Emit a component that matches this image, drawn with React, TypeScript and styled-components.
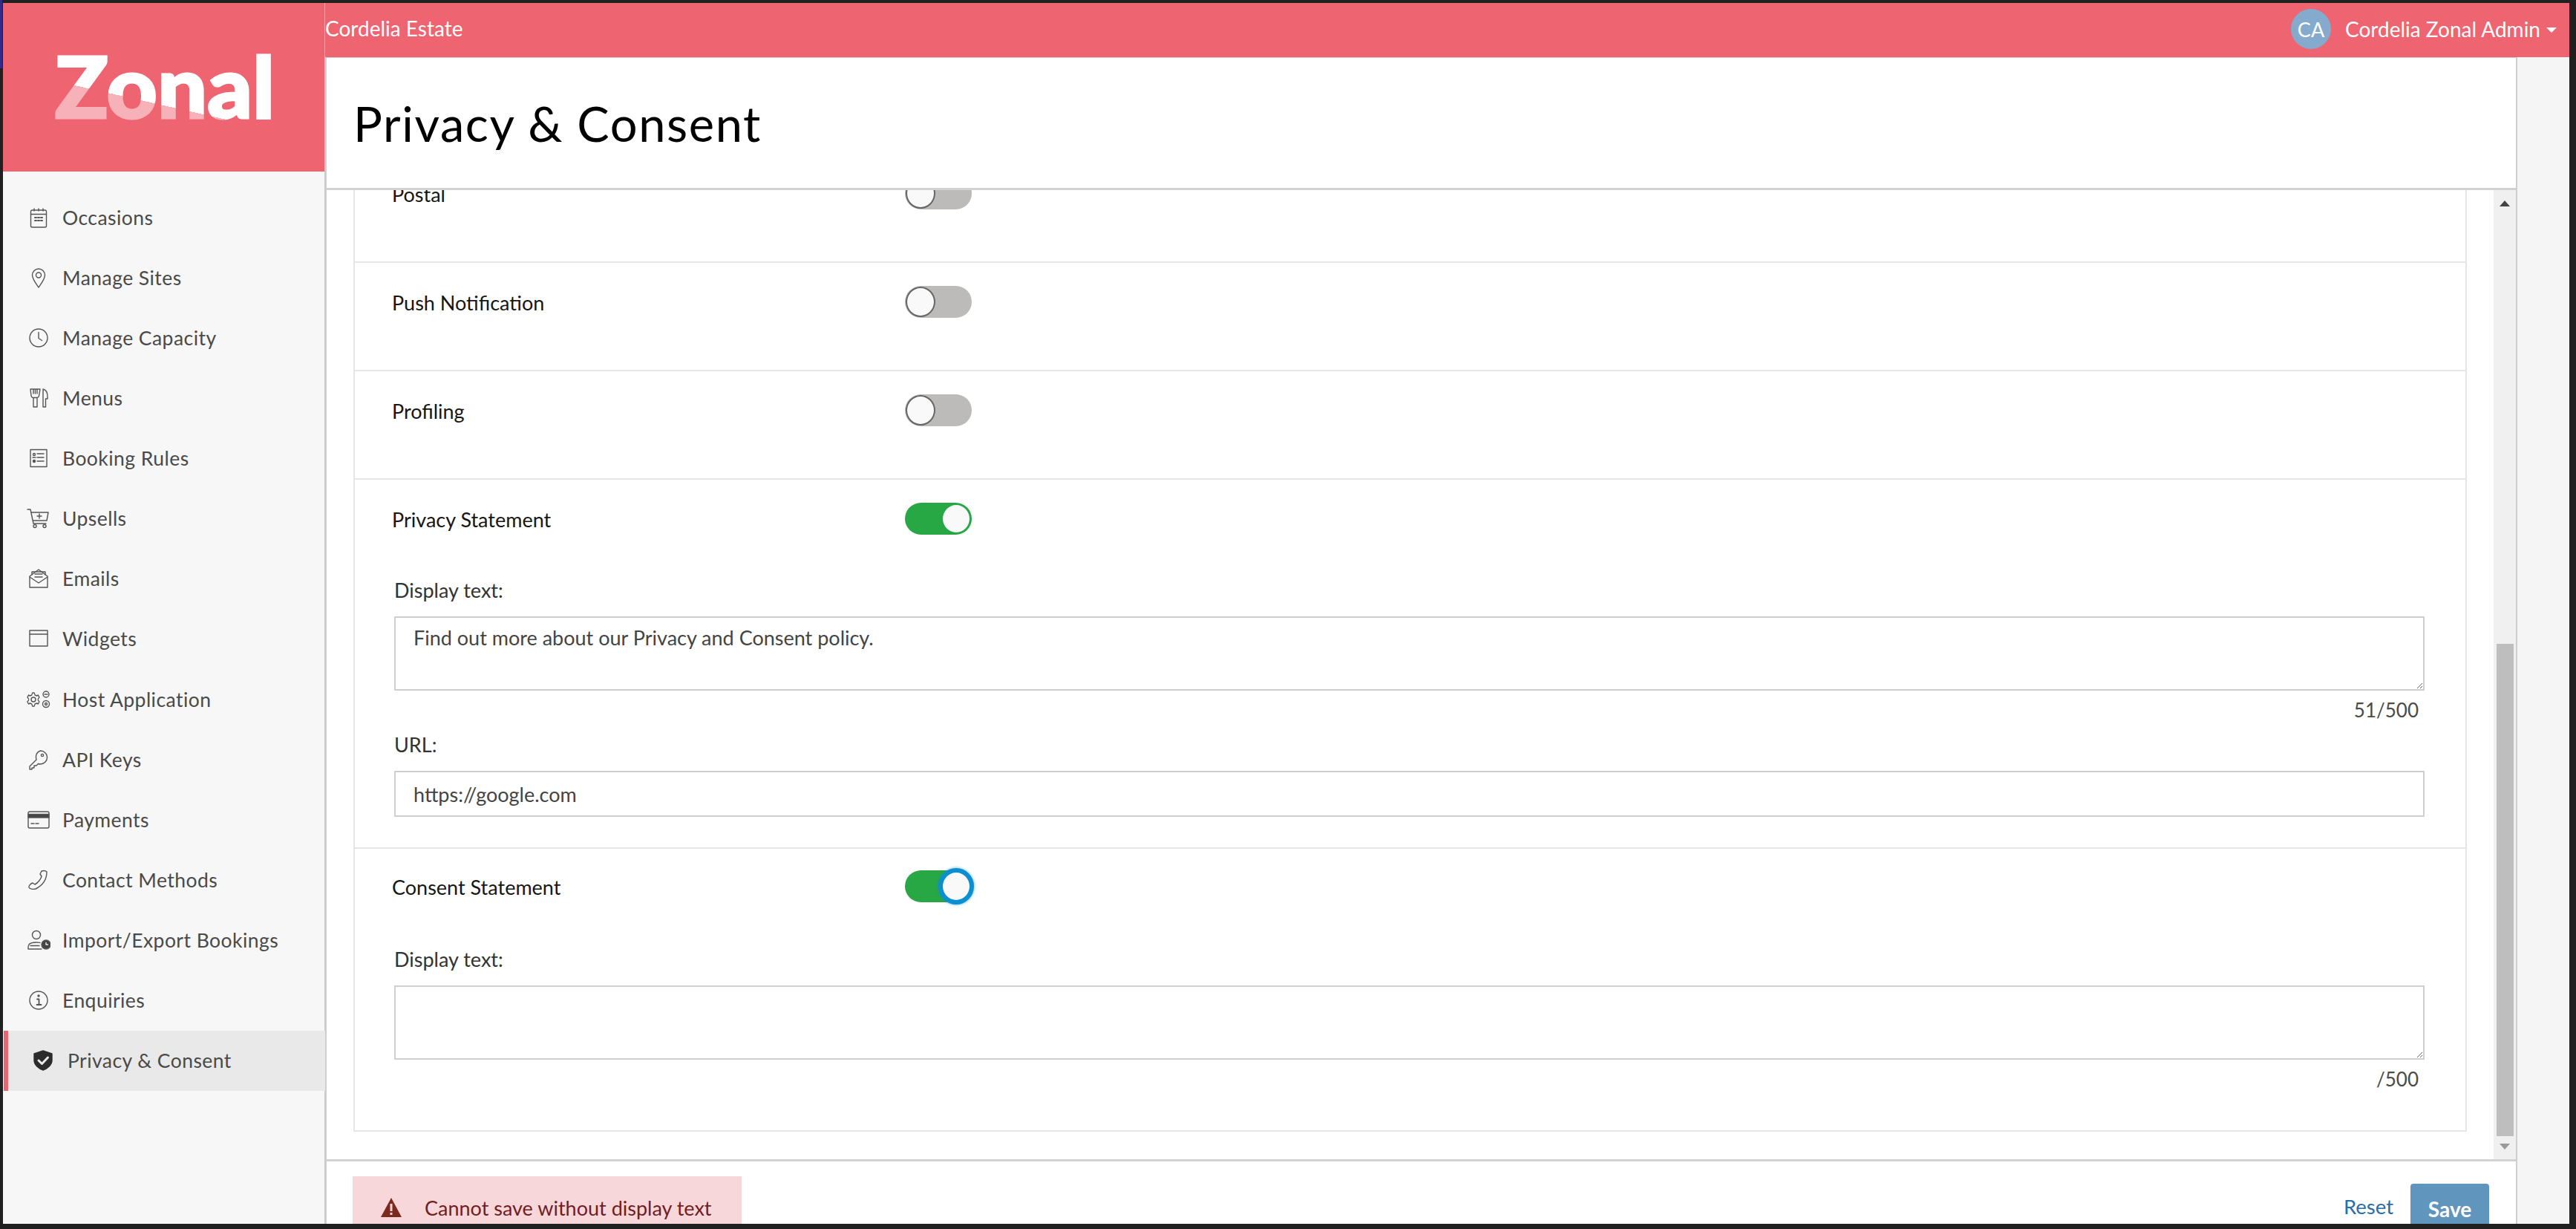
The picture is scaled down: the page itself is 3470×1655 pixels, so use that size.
import React from "react";
import styled, { createGlobalStyle } from "styled-components";

const Global = createGlobalStyle`
  html, body { margin: 0; padding: 0; height: 100%; background: #1e1e1e; }
  * { box-sizing: border-box; }
  body { font-family: "Lato", "Open Sans", sans-serif; overflow: hidden; }
`;

const Frame = styled.div`
  position: relative;
  width: 3470px;
  height: 1655px;
  padding: 4px 9px 7px 4px;
  background: #202020;
  overflow: hidden;
  &::before {
    content: "";
    position: absolute;
    left: 0;
    top: 0;
    width: 3px;
    height: 92px;
    background: #2c2c8c;
  }
`;
const Shell = styled.div`
  display: grid;
  grid-template-columns: 434px 1fr;
  height: 100%;
  background: #f5f5f5;
`;
const Sidebar = styled.aside`
  display: flex;
  flex-direction: column;
  background: #f7f7f7;
  border-right: 1px solid #c9c9c9;
`;
const LogoBlock = styled.div`
  height: 227px;
  flex: none;
  background: #ee6471;
  padding: 60px 0 0 60px;
`;
const Nav = styled.nav`
  display: flex;
  flex-direction: column;
  padding-top: 21px;
`;
const NavItem = styled.a<{ $active?: boolean }>`
  display: flex;
  align-items: center;
  height: 81.14px;
  gap: ${(p) => (p.$active ? "17px" : "16px")};
  padding-left: ${(p) => (p.$active ? "31px" : "32px")};
  margin-left: ${(p) => (p.$active ? "1px" : "0")};
  margin-right: -1px;
  border-left: ${(p) => (p.$active ? "6px solid #ee6471" : "0")};
  background: ${(p) => (p.$active ? "#e9e9e9" : "transparent")};
  color: #4a4a4a;
  font-size: 26.5px;
  letter-spacing: 0.45px;
`;
const NavGlyph = styled.svg`
  flex: none;
  width: 32px;
  height: 28px;
  fill: none;
  stroke: #555;
  stroke-width: 1.4;
  stroke-linecap: round;
  stroke-linejoin: round;
`;
const Main = styled.div`
  display: flex;
  flex-direction: column;
  min-width: 0;
  min-height: 0;
`;
const TopBar = styled.header`
  flex: none;
  height: 73px;
  background: #ee6471;
  color: #fff;
  display: flex;
  align-items: center;
  justify-content: space-between;
  padding: 0 17px 0 0;
  font-size: 28px;
`;
const Estate = styled.span`
  padding-bottom: 6px;
`;
const UserMenu = styled.div`
  display: flex;
  align-items: center;
  gap: 19px;
  padding-bottom: 3px;
`;
const Avatar = styled.span`
  width: 54px;
  height: 54px;
  border-radius: 50%;
  background: #84abcd;
  display: flex;
  align-items: center;
  justify-content: center;
  font-size: 27px;
`;
const Caret = styled.span`
  display: inline-block;
  width: 0;
  height: 0;
  margin-left: 8px;
  margin-bottom: 4px;
  vertical-align: middle;
  border-left: 7px solid transparent;
  border-right: 7px solid transparent;
  border-top: 7px solid #fff;
`;
const Content = styled.div`
  flex: 1;
  min-height: 0;
  display: flex;
  flex-direction: column;
  width: 2953px;
  background: #fff;
  border: 2px solid #cfcfcf;
  border-bottom: 0;
  border-top-width: 1px;
`;
const TitleBar = styled.div`
  flex: none;
  height: 178px;
  display: flex;
  align-items: center;
  padding-left: 36px;
  border-bottom: 3px solid #d2d2d2;
`;
const Title = styled.h1`
  margin: 0;
  font-size: 65px;
  font-weight: 400;
  color: #000;
  letter-spacing: 1.6px;
`;
const Middle = styled.div`
  flex: 1;
  min-height: 0;
  display: flex;
`;
const Scroller = styled.div`
  flex: 1;
  min-width: 0;
  overflow: hidden;
  padding: 0 36px 0 36px;
`;
const Card = styled.section`
  margin-top: -50px;
  border: 2px solid #e6e6e6;
`;
const Row = styled.div<{ $top?: number; $bottom?: number; $last?: boolean }>`
  min-height: 146px;
  padding: ${(p) => p.$top ?? 31}px 55px ${(p) => p.$bottom ?? 0}px 50px;
  border-bottom: ${(p) => (p.$last ? "0" : "2px solid #e6e6e6")};
`;
const RowHead = styled.div`
  display: flex;
  align-items: center;
  height: 43px;
`;
const RowLabel = styled.span`
  width: 691px;
  flex: none;
  font-size: 27px;
  color: #161616;
  padding-top: 2px;
`;
const Toggle = styled.span<{ $on?: boolean; $focus?: boolean }>`
  display: flex;
  justify-content: ${(p) => (p.$on ? "flex-end" : "flex-start")};
  width: 90px;
  height: 43px;
  padding: 1px;
  border-radius: 22px;
  background: ${(p) => (p.$on ? "#28a745" : "#bdbbba")};
`;
const Knob = styled.span<{ $on?: boolean; $focus?: boolean }>`
  width: 40px;
  height: 41px;
  border-radius: 50%;
  background: #f9f9f9;
  border: 2px solid ${(p) => (p.$on ? "#28a745" : "#666")};
  box-shadow: ${(p) => (p.$focus ? "0 0 0 4px #0b8fd0, 0 0 3px 5px rgba(11,143,208,.45)" : "none")};
  ${(p) => (p.$focus ? "border-color: #0b8fd0;" : "")}
`;
const Field = styled.div`
  margin-left: 3px;
`;
const FieldLabel = styled.label<{ $top?: number }>`
  display: block;
  height: 36px;
  line-height: 36px;
  margin-top: ${(p) => p.$top ?? 0}px;
  font-size: 27px;
  color: #333;
`;
const TextArea = styled.textarea`
  display: block;
  width: 100%;
  height: 100px;
  margin-top: 17px;
  padding: 8px 24px;
  border: 2px solid #cfcfcf;
  border-radius: 0;
  background: #fff;
  resize: vertical;
  outline: none;
  font: 400 27px/1.4 "Lato", "Open Sans", sans-serif;
  color: #444;
`;
const TextInput = styled.input`
  display: block;
  width: 100%;
  height: 62px;
  margin-top: 17px;
  padding: 0 24px;
  border: 2px solid #cfcfcf;
  border-radius: 0;
  outline: none;
  font: 400 27px "Lato", "Open Sans", sans-serif;
  color: #444;
`;
const Counter = styled.div`
  height: 36px;
  line-height: 36px;
  margin-top: 8px;
  padding-right: 8px;
  text-align: right;
  font-size: 26px;
  color: #4a4a4a;
`;
const ScrollBar = styled.div`
  flex: none;
  width: 30px;
  background: #f0f0f0;
  display: flex;
  flex-direction: column;
  align-items: center;
`;
const ArrowUp = styled.span`
  flex: none;
  width: 0;
  height: 0;
  margin-top: 14px;
  border-left: 7px solid transparent;
  border-right: 7px solid transparent;
  border-bottom: 8px solid #444;
`;
const Thumb = styled.div`
  flex: none;
  width: 23px;
  height: 663px;
  margin-top: 589px;
  background: #bebebe;
`;
const ArrowDown = styled.span`
  flex: none;
  width: 0;
  height: 0;
  margin-top: 10px;
  border-left: 7px solid transparent;
  border-right: 7px solid transparent;
  border-top: 8px solid #9a9a9a;
`;
const Footer = styled.footer`
  flex: none;
  height: 87px;
  overflow: hidden;
  display: flex;
  justify-content: space-between;
  padding: 20px 36px 0 35px;
  border-top: 3px solid #d2d2d2;
`;
const Alert = styled.div`
  width: 524px;
  height: 90px;
  display: flex;
  align-items: center;
  gap: 30px;
  padding: 0 0 6px 37px;
  background: #f8d7da;
  color: #721c24;
  font-size: 27px;
`;
const AlertGlyph = styled.svg`
  flex: none;
  width: 30px;
  height: 28px;
  fill: #7c2a1e;
`;
const Actions = styled.div`
  display: flex;
  align-items: flex-start;
  gap: 23px;
  margin-top: 10px;
`;
const ResetLink = styled.a`
  color: #2a6da8;
  font-size: 27.500px;
  padding-top: 14px;
`;
const SaveButton = styled.button`
  width: 106px;
  height: 80px;
  border: 0;
  padding: 0 0 12px;
  border-radius: 4px;
  background: #6096bd;
  color: #fff;
  font: 700 28px "Lato", "Open Sans", sans-serif;
`;

const CalendarIcon = () => (
  <NavGlyph viewBox="0 0 32 28">
    <rect x="5.5" y="4" width="21" height="23" rx="2" />
    <path d="M5.5 9.5h21M10 2v3M16 2v3M22 2v3" />
    <path d="M11 14h2M15 14h2M19 14h2M11 18h2M15 18h2M19 18h2" strokeWidth="2" />
  </NavGlyph>
);
const PinIcon = () => (
  <NavGlyph viewBox="0 0 32 28">
    <path d="M16 27C11 20 7.5 15.500 7.500 10.500a8.500 8.500 0 0 1 17 0C24.500 15.500 21 20 16 27z" />
    <circle cx="16" cy="10.500" r="3.500" />
  </NavGlyph>
);
const ClockIcon = () => (
  <NavGlyph viewBox="0 0 32 28">
    <circle cx="16" cy="14" r="12" />
    <path d="M16 6.500V14.500l4.500 3" />
  </NavGlyph>
);
const MenusIcon = () => (
  <NavGlyph viewBox="0 0 32 28">
    <path d="M5 2h13l-1.500 9a3 3 0 0 1-3 2.500h-4.500a3 3 0 0 1-3-2.500zM9 13.500V26h5V13.500M9 2v6M11.500 2v6M14 2v6" />
    <path d="M22 26V2c4 1 6 5 6 10v3h-2.500v11z" />
  </NavGlyph>
);
const RulesIcon = () => (
  <NavGlyph viewBox="0 0 32 28">
    <rect x="5" y="2.500" width="22" height="23" />
    <circle cx="10" cy="9" r="1.500" />
    <circle cx="10" cy="18" r="1.500" fill="#555" />
    <path d="M14 8h9M14 13h9M14 18h9M8 13h4" />
  </NavGlyph>
);
const CartIcon = () => (
  <NavGlyph viewBox="0 0 32 28">
    <path d="M1 2h4l4 19h17M6 6h23l-2 11H8.500" />
    <circle cx="11" cy="24.500" r="2" />
    <circle cx="24" cy="24.500" r="2" />
    <path d="M17 8v6M14 11h6" />
  </NavGlyph>
);
const MailIcon = () => (
  <NavGlyph viewBox="0 0 32 28">
    <path d="M4 11v15h24V11L16 2z" />
    <path d="M4 12l12 8 12-8M7 9V5h18v4" />
    <path d="M11 8h10M11 12h10" />
  </NavGlyph>
);
const WidgetIcon = () => (
  <NavGlyph viewBox="0 0 32 28">
    <rect x="4" y="3" width="24" height="21" />
    <path d="M4 8h24" />
  </NavGlyph>
);
const HostIcon = () => (
  <NavGlyph viewBox="0 0 32 28">
    <path d="M9 6l3 0 1 3 3 1 2-1 2 3-2 2v2l2 2-2 3-2-1-3 1-1 3H9l-1-3-3-1-2 1-2-3 2-2v-2l-2-2 2-3 2 1 3-1z" transform="translate(0 -1) scale(.85 1)" />
    <circle cx="9" cy="14" r="3" />
    <circle cx="26" cy="7" r="4" />
    <circle cx="26" cy="20" r="4.500" />
    <circle cx="26" cy="20" r="1.500" />
    <path d="M24 7h4" />
  </NavGlyph>
);
const KeyIcon = () => (
  <NavGlyph viewBox="0 0 32 28">
    <path d="M18.500 2a9 9 0 0 1 0 18c-1 0-2-.2-3-.5L13 22h-3v3H7v2H4v-4l9-9c-.3-1-.5-2-.5-3A9 9 0 0 1 18.500 2z" />
    <circle cx="21" cy="8" r="1.600" />
  </NavGlyph>
);
const CardIcon = () => (
  <NavGlyph viewBox="0 0 32 28">
    <rect x="2" y="3" width="28" height="22" rx="2" />
    <path d="M2 6.500h28V11H2z" fill="#444" />
    <path d="M6 19h4M12 19h4" />
  </NavGlyph>
);
const PhoneIcon = () => (
  <NavGlyph viewBox="0 0 32 28">
    <path d="M20 2c3-1 6 0 7 1 0 10-5 18-15 23-4 1-8 0-9-2-.5-2 2-5 5-6l3 2c4-2 8-7 9-11l-2-3 2-4z" />
  </NavGlyph>
);
const PersonIcon = () => (
  <NavGlyph viewBox="0 0 32 28">
    <circle cx="13" cy="7" r="5.500" />
    <path d="M2 26v-3c0-4 4-6 11-6 2 0 3 .2 5 .5M2 26h18M5 21.500h12" />
    <circle cx="26" cy="20" r="6" fill="#444" />
    <path d="M26 17.500V20h2.500" stroke="#eee" />
  </NavGlyph>
);
const InfoIcon = () => (
  <NavGlyph viewBox="0 0 32 28">
    <circle cx="16" cy="14" r="12" />
    <path d="M14 12.500h2.500V20M13.500 20h6" strokeWidth="1.800" />
    <circle cx="16" cy="8" r="1" fill="#555" />
  </NavGlyph>
);
const ShieldIcon = () => (
  <NavGlyph viewBox="0 0 32 28">
    <path d="M16 1l12 4v9c0 6-6 11-12 13C10 25 4 20 4 14V5z" fill="#2c2c2c" stroke="#2c2c2c" />
    <path d="M10 14l4.500 4.500L22.500 10" stroke="#e9e9e9" strokeWidth="3" />
  </NavGlyph>
);

const items = [
  ["Occasions", CalendarIcon],
  ["Manage Sites", PinIcon],
  ["Manage Capacity", ClockIcon],
  ["Menus", MenusIcon],
  ["Booking Rules", RulesIcon],
  ["Upsells", CartIcon],
  ["Emails", MailIcon],
  ["Widgets", WidgetIcon],
  ["Host Application", HostIcon],
  ["API Keys", KeyIcon],
  ["Payments", CardIcon],
  ["Contact Methods", PhoneIcon],
  ["Import/Export Bookings", PersonIcon],
  ["Enquiries", InfoIcon],
  ["Privacy & Consent", ShieldIcon],
] as const;

const Switch = ({ on, focus }: { on?: boolean; focus?: boolean }) => (
  <Toggle $on={on}>
    <Knob $on={on} $focus={focus} />
  </Toggle>
);

export default function App() {
  return (
    <Frame>
      <Global />
      <Shell>
        <Sidebar>
          <LogoBlock>
            <svg width="360" height="160" viewBox="0 0 360 160" role="img" aria-label="Zonal">
              <defs>
                <linearGradient id="logoFill" gradientUnits="userSpaceOnUse" x1="132" y1="-30" x2="88" y2="165">
                  <stop offset="0.5" stopColor="#ffffff" />
                  <stop offset="0.5" stopColor="#f7b1b8" />
                </linearGradient>
              </defs>
              <text
                x="10"
                y="95"
                fontFamily="Lato, sans-serif"
                fontWeight="900"
                fontSize="114"
                textLength="296"
                lengthAdjust="spacingAndGlyphs"
                fill="url(#logoFill)"
                stroke="url(#logoFill)"
                strokeWidth="3"
              >
                Zonal
              </text>
            </svg>
          </LogoBlock>
          <Nav>
            {items.map(([label, Icon]) => (
              <NavItem key={label} $active={label === "Privacy & Consent"}>
                <Icon />
                {label}
              </NavItem>
            ))}
          </Nav>
        </Sidebar>
        <Main>
          <TopBar>
            <Estate>Cordelia Estate</Estate>
            <UserMenu>
              <Avatar>CA</Avatar>
              <span>
                Cordelia Zonal Admin
                <Caret />
              </span>
            </UserMenu>
          </TopBar>
          <Content>
            <TitleBar>
              <Title>Privacy &amp; Consent</Title>
            </TitleBar>
            <Middle>
              <Scroller>
                <Card>
                  <Row>
                    <RowHead>
                      <RowLabel>Postal</RowLabel>
                      <Switch />
                    </RowHead>
                  </Row>
                  <Row>
                    <RowHead>
                      <RowLabel>Push Notification</RowLabel>
                      <Switch />
                    </RowHead>
                  </Row>
                  <Row>
                    <RowHead>
                      <RowLabel>Profiling</RowLabel>
                      <Switch />
                    </RowHead>
                  </Row>
                  <Row $bottom={41}>
                    <RowHead>
                      <RowLabel>Privacy Statement</RowLabel>
                      <Switch on />
                    </RowHead>
                    <Field>
                      <FieldLabel $top={57}>Display text:</FieldLabel>
                      <TextArea readOnly defaultValue="Find out more about our Privacy and Consent policy." />
                      <Counter>51/500</Counter>
                      <FieldLabel $top={11}>URL:</FieldLabel>
                      <TextInput readOnly defaultValue="https://google.com" />
                    </Field>
                  </Row>
                  <Row $top={29} $bottom={51} $last>
                    <RowHead>
                      <RowLabel>Consent Statement</RowLabel>
                      <Switch on focus />
                    </RowHead>
                    <Field>
                      <FieldLabel $top={59}>Display text:</FieldLabel>
                      <TextArea readOnly defaultValue="" />
                      <Counter>/500</Counter>
                    </Field>
                  </Row>
                </Card>
              </Scroller>
              <ScrollBar>
                <ArrowUp />
                <Thumb />
                <ArrowDown />
              </ScrollBar>
            </Middle>
            <Footer>
              <Alert>
                <AlertGlyph viewBox="0 0 30 28">
                  <path d="M15 1L29 27H1z" />
                  <rect x="13.500" y="9" width="3" height="10" fill="#f8d7da" />
                  <rect x="13.500" y="21" width="3" height="3" fill="#f8d7da" />
                </AlertGlyph>
                Cannot save without display text
              </Alert>
              <Actions>
                <ResetLink>Reset</ResetLink>
                <SaveButton>Save</SaveButton>
              </Actions>
            </Footer>
          </Content>
        </Main>
      </Shell>
    </Frame>
  );
}
